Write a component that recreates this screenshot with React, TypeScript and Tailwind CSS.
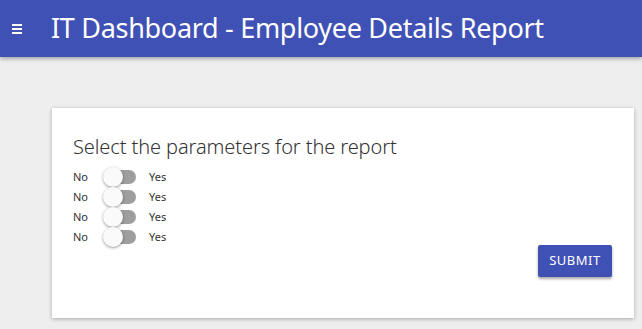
import React from "react";

function Toggle() {
  return (
    <div className="relative w-[33px] h-[20px] flex items-center">
      <div className="absolute left-[6px] right-0 h-[14px] rounded-full bg-[#9e9e9e]" />
      <div className="absolute left-0 top-0 w-[20px] h-[20px] rounded-full bg-[#fafafa] shadow-[0_1px_3px_rgba(0,0,0,0.4)]" />
    </div>
  );
}

export default function App() {
  const rows = [0, 1, 2, 3];
  return (
    <div className="w-[642px] h-[329px] bg-[#eeeeee] overflow-hidden" style={{ fontFamily: '"Noto Sans", "Open Sans", sans-serif' }}>
      <header className="h-[57px] bg-[#3f51b5] flex items-center shadow-[0_2px_4px_rgba(0,0,0,0.3)] relative z-10">
        <div className="w-[51px] pl-[12px]">
          <div className="flex flex-col gap-[2px] w-[10px]">
            <div className="h-[2px] bg-white" />
            <div className="h-[2px] bg-white" />
            <div className="h-[2px] bg-white" />
          </div>
        </div>
        <h1 className="text-white text-[27px] leading-none tracking-[-0.3px] mb-[2px]">IT Dashboard - Employee Details Report</h1>
      </header>
      <div className="pt-[51px] pl-[52px] pr-[8px]">
        <div className="bg-white h-[210px] shadow-[0_1px_4px_rgba(0,0,0,0.3)] pl-[21px] pr-[22px] pt-[26px] relative">
          <h2 className="text-[20px] font-light text-[#333] leading-[26px] tracking-[-0.1px]">Select the parameters for the report</h2>
          <div className="mt-[7px] flex flex-col">
            {rows.map((r) => (
              <div key={r} className="h-[20px] flex items-center text-[11px] text-[#333]">
                <span className="w-[30px]">No</span>
                <Toggle />
                <span className="ml-[13px]">Yes</span>
              </div>
            ))}
          </div>
          <div className="absolute right-[22px] top-[137px]">
            <button className="w-[74px] h-[32px] bg-[#3f51b5] text-white text-[13px] tracking-[0.5px] rounded-[2px] shadow-[0_2px_3px_rgba(0,0,0,0.35)]">SUBMIT</button>
          </div>
        </div>
      </div>
    </div>
  );
}
